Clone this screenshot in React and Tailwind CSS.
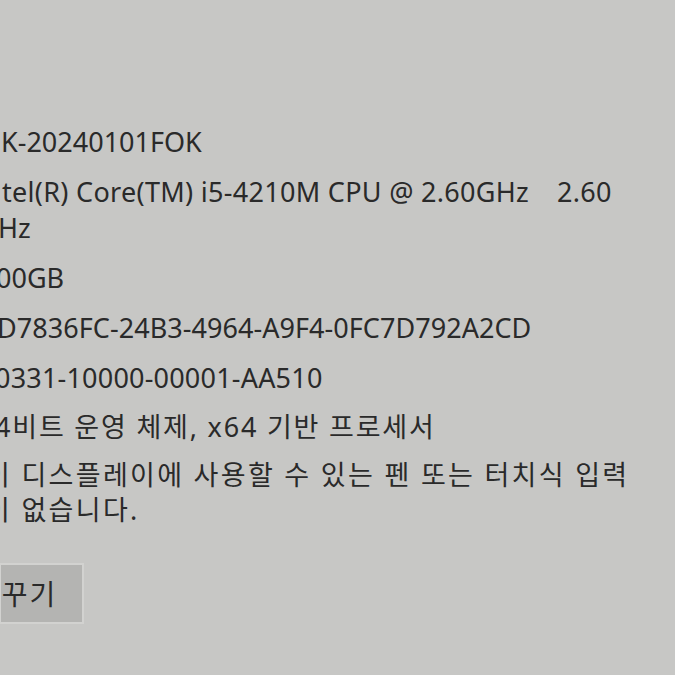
export default function App() {
  const font = { fontFamily: '"Noto Sans", "Noto Sans CJK KR", sans-serif' };
  return (
    <div
      className="w-[675px] h-[675px] overflow-hidden bg-[#c7c7c5] text-[#2a2a2a] relative"
      style={font}
    >
      <div className="pt-[124px] flex flex-col gap-[14px] text-[27px] leading-[36px]">
        <div className="pl-[1px]">K-20240101FOK</div>
        <div>
          <div className="pl-[2px] flex tracking-[0.3px]">
            <span>tel(R) Core(TM) i5-4210M CPU @ 2.60GHz</span>
            <span className="ml-[28px]">2.60</span>
          </div>
          <div className="-ml-[2px]">Hz</div>
        </div>
        <div className="-ml-[4px]">00GB</div>
        <div className="-ml-[3px] tracking-[0.05px]">D7836FC-24B3-4964-A9F4-0FC7D792A2CD</div>
        <div className="-ml-[5px] tracking-[0.2px]">0331-10000-00001-AA510</div>
        <div className="-ml-[5px] -mt-[1px] tracking-[1.8px]">4비트 운영 체제, x64 기반 프로세서</div>
        <div className="-mt-[2px] tracking-[2.3px]">
          <div className="-ml-[15px]">이 디스플레이에 사용할 수 있는 펜 또는 터치식 입력</div>
          <div className="-ml-[15px] -mt-[1px]">이 없습니다.</div>
        </div>
      </div>
      <div className="absolute left-0 top-[563px] w-[85px] h-[61px] -ml-px bg-[#b4b4b2] border-2 border-[#d2d2d0] flex items-center overflow-hidden">
        <span className="-ml-[27px] text-[28px] leading-none whitespace-nowrap tracking-[2px]">바꾸기</span>
      </div>
    </div>
  );
}
